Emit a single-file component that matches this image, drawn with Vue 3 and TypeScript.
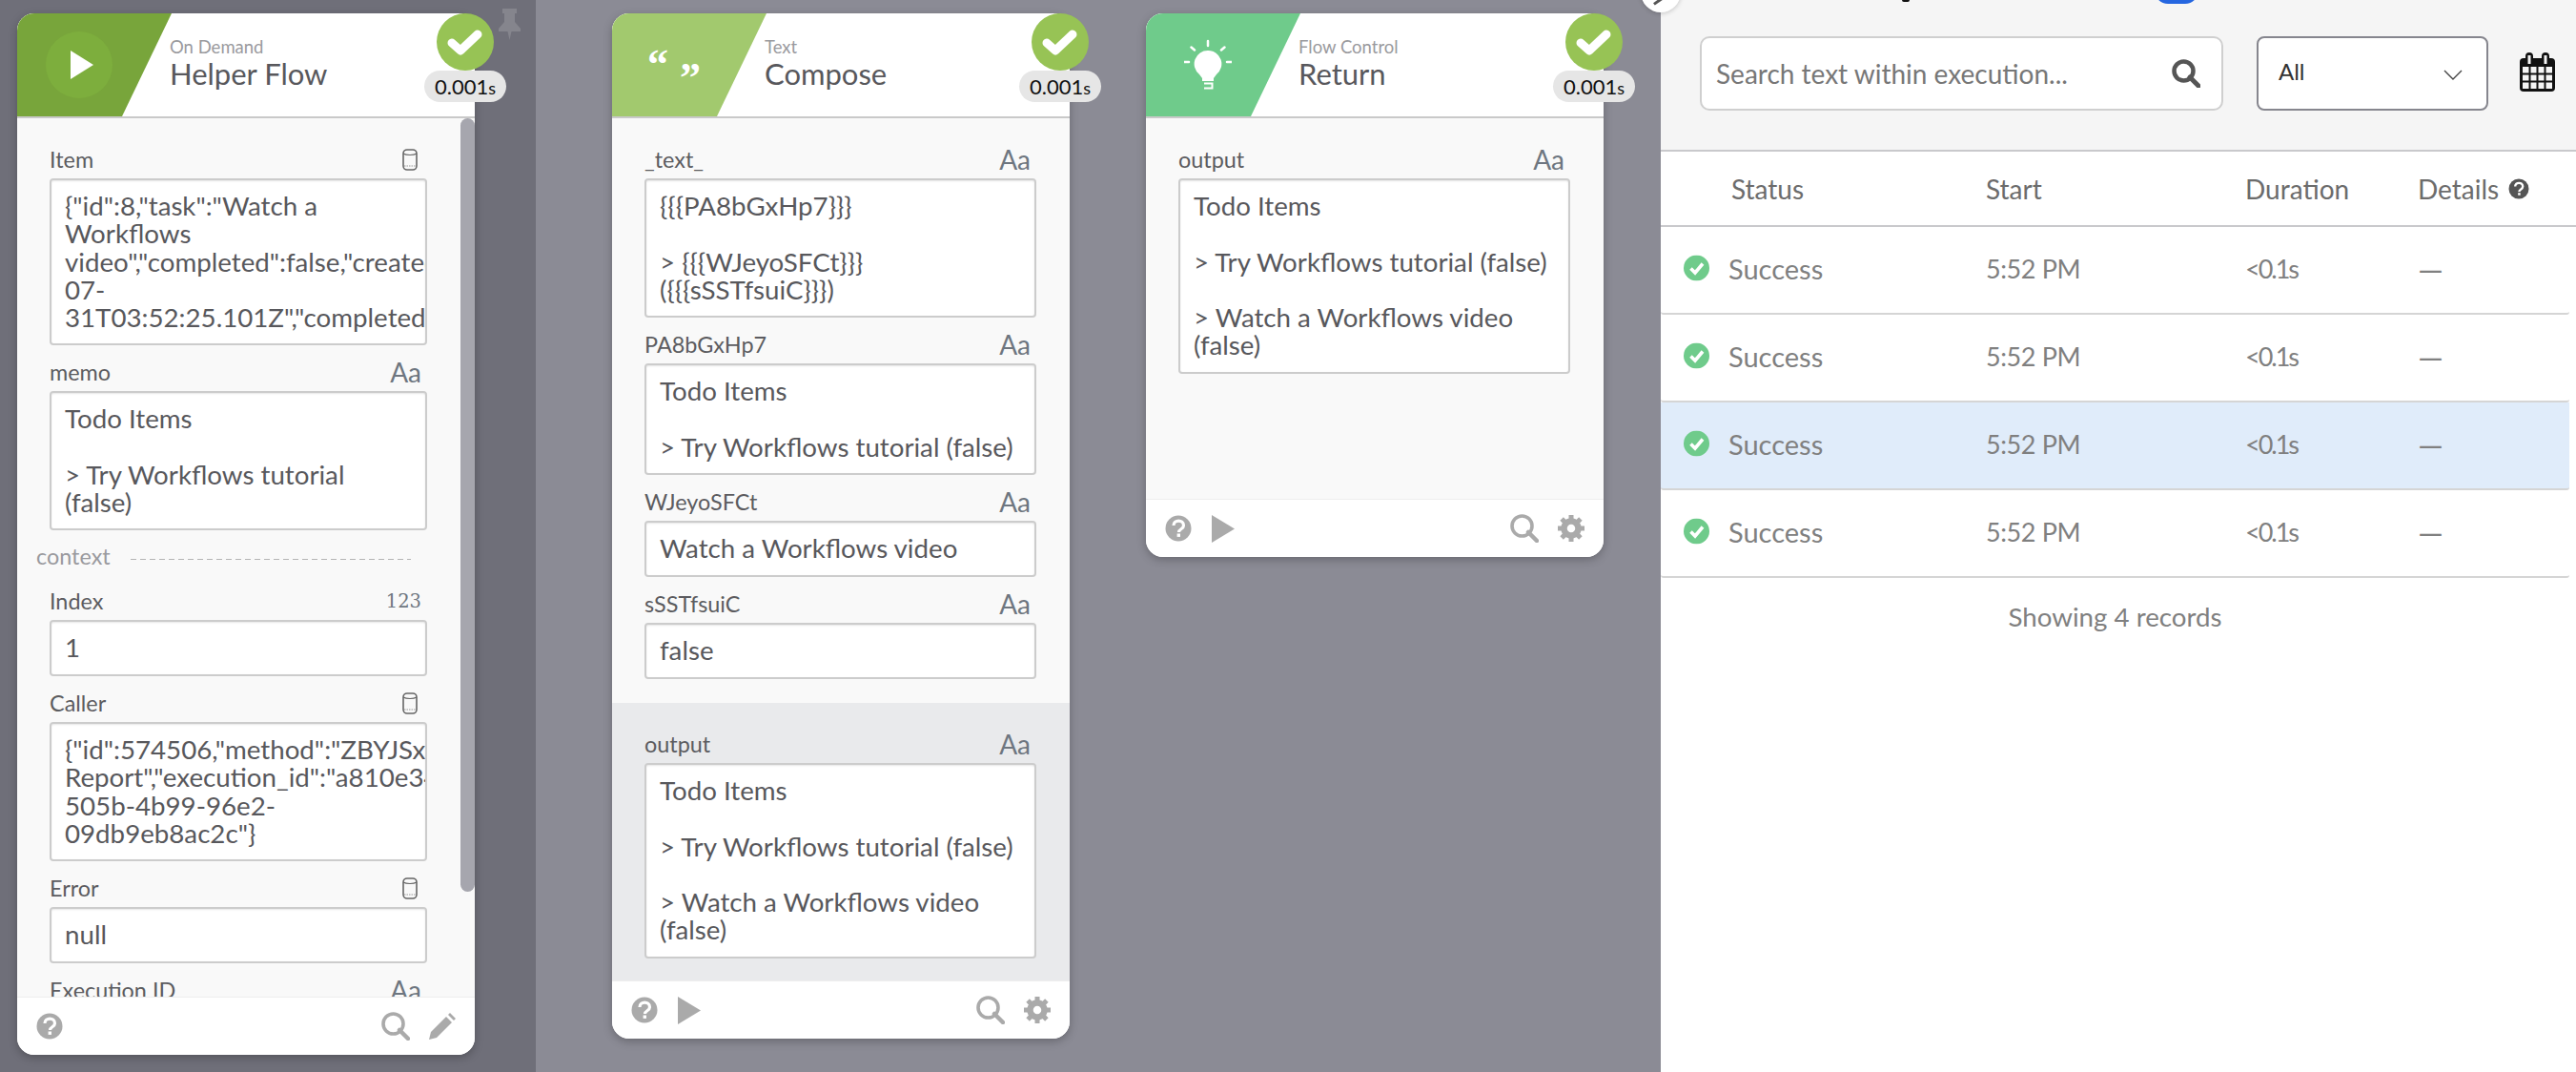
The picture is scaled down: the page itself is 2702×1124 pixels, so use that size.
<template>
  <div class="page">
    <!-- pinned step column -->
    <aside class="pinned">
      <section class="card">
        <header class="card-head">
          <div class="head-tab tab-dark">
            <span class="play-disc">
              <svg viewBox="0 0 24 30" width="24" height="30"><path d="M0 0 24 15 0 30Z" fill="#fff" /></svg>
            </span>
          </div>
          <div class="head-text">
            <div class="kind">On Demand</div>
            <div class="title">Helper Flow</div>
          </div>
        </header>
        <div class="status-badge">
          <svg viewBox="0 0 60 60" width="60" height="60"><circle cx="30" cy="30" r="30" fill="#97c355" /><path d="M16 31 25 39 43 22" fill="none" stroke="#fff" stroke-width="9" stroke-linecap="round" stroke-linejoin="round" /></svg>
          <span class="time">0.001<small>s</small></span>
        </div>
        <div class="pinned-body">
          <div class="scroll-thumb"></div>
          <div class="field">
            <div class="field-label"><span>Item</span><svg class="db" viewBox="0 0 16 23" width="16" height="23"><rect x="1" y="1" width="14" height="21" rx="4" fill="none" stroke="#666" stroke-width="1.600" /><path d="M1 5c3 2 11 2 14 0" fill="none" stroke="#666" stroke-width="1.200" /><path d="M2 18h12" stroke="#999" stroke-width="1" stroke-dasharray="1.500 1" /></svg></div>
            <div class="box clip h-item">{{ itemJson }}</div>
          </div>
          <div class="field">
            <div class="field-label"><span>memo</span><span class="aa">Aa</span></div>
            <div class="box h-memo">{{ memo }}</div>
          </div>
          <div class="context"><span>context</span><i></i></div>
          <div class="field">
            <div class="field-label"><span>Index</span><span class="num">123</span></div>
            <div class="box h-one">1</div>
          </div>
          <div class="field">
            <div class="field-label"><span>Caller</span><svg class="db" viewBox="0 0 16 23" width="16" height="23"><rect x="1" y="1" width="14" height="21" rx="4" fill="none" stroke="#666" stroke-width="1.600" /><path d="M1 5c3 2 11 2 14 0" fill="none" stroke="#666" stroke-width="1.200" /><path d="M2 18h12" stroke="#999" stroke-width="1" stroke-dasharray="1.500 1" /></svg></div>
            <div class="box clip h-caller">{{ callerJson }}</div>
          </div>
          <div class="field">
            <div class="field-label"><span>Error</span><svg class="db" viewBox="0 0 16 23" width="16" height="23"><rect x="1" y="1" width="14" height="21" rx="4" fill="none" stroke="#666" stroke-width="1.600" /><path d="M1 5c3 2 11 2 14 0" fill="none" stroke="#666" stroke-width="1.200" /><path d="M2 18h12" stroke="#999" stroke-width="1" stroke-dasharray="1.500 1" /></svg></div>
            <div class="box h-one">null</div>
          </div>
          <div class="field">
            <div class="field-label"><span>Execution ID</span><span class="aa">Aa</span></div>
          </div>
        </div>
        <footer class="card-foot">
          <svg class="ic" viewBox="0 0 28 28" width="28" height="28"><circle cx="14" cy="14" r="13.500" fill="#aaa" /><path d="M9 11c0-6.500 10.500-6.500 10.500 0 0 4-5 3.500-5 7" fill="none" stroke="#fff" stroke-width="3.200" /><rect x="12.600" y="19.500" width="3.400" height="3.400" fill="#fff" /></svg>
          <span class="grow"></span>
          <svg class="ic" viewBox="0 0 30 30" width="30" height="30"><circle cx="12.500" cy="12.500" r="10.500" fill="none" stroke="#aaa" stroke-width="3.600" /><path d="M19 19 28 28" stroke="#aaa" stroke-width="4.500" stroke-linecap="round" /></svg>
          <svg class="ic pencil" viewBox="0 0 28 28" width="28" height="28"><path d="M0 28 2 20 18 4 24 10 8 26ZM20 2l2-2 6 6-2 2Z" fill="#aaa" /></svg>
        </footer>
      </section>
      <svg class="pin" viewBox="0 0 23 33" width="23" height="33"><path d="M4 0h15v5h-2v9l6 7v3H13.500l-2 9-2-9H0v-3l6-7V5H4Z" fill="#85858d" /></svg>
    </aside>

    <!-- canvas with the rest of the flow -->
    <main class="canvas">
      <section class="card">
        <header class="card-head">
          <div class="head-tab tab-text">
            <span class="quotes"><b>“</b><b class="low">”</b></span>
          </div>
          <div class="head-text">
            <div class="kind">Text</div>
            <div class="title">Compose</div>
          </div>
        </header>
        <div class="status-badge">
          <svg viewBox="0 0 60 60" width="60" height="60"><circle cx="30" cy="30" r="30" fill="#97c355" /><path d="M16 31 25 39 43 22" fill="none" stroke="#fff" stroke-width="9" stroke-linecap="round" stroke-linejoin="round" /></svg>
          <span class="time">0.001<small>s</small></span>
        </div>
        <div class="card-body compose-in">
          <div class="field" v-for="f in composeFields" :key="f.label">
            <div class="field-label"><span>{{ f.label }}</span><span class="aa">Aa</span></div>
            <div class="box" :class="f.cls">{{ f.value }}</div>
          </div>
        </div>
        <div class="card-body compose-out">
          <div class="field">
            <div class="field-label"><span>output</span><span class="aa">Aa</span></div>
            <div class="box h-output">{{ output }}</div>
          </div>
        </div>
        <footer class="card-foot">
          <svg class="ic" viewBox="0 0 28 28" width="28" height="28"><circle cx="14" cy="14" r="13.500" fill="#aaa" /><path d="M9 11c0-6.500 10.500-6.500 10.500 0 0 4-5 3.500-5 7" fill="none" stroke="#fff" stroke-width="3.200" /><rect x="12.600" y="19.500" width="3.400" height="3.400" fill="#fff" /></svg>
          <svg class="ic run" viewBox="0 0 24 29" width="24" height="29"><path d="M0 0 24 14.500 0 29Z" fill="#aaa" /></svg>
          <span class="grow"></span>
          <svg class="ic" viewBox="0 0 30 30" width="30" height="30"><circle cx="12.500" cy="12.500" r="10.500" fill="none" stroke="#aaa" stroke-width="3.600" /><path d="M19 19 28 28" stroke="#aaa" stroke-width="4.500" stroke-linecap="round" /></svg>
          <svg class="ic gear" viewBox="0 0 28 28" width="28" height="28"><circle cx="14" cy="14" r="7.500" fill="none" stroke="#aaa" stroke-width="6.500" /><path d="M14 0v28M0 14h28M4.100 4.100l19.800 19.800M23.900 4.100 4.100 23.900" stroke="#aaa" stroke-width="5" stroke-dasharray="5 18" /></svg>
        </footer>
      </section>

      <section class="card">
        <header class="card-head">
          <div class="head-tab tab-flow">
            <svg viewBox="0 0 50 54" width="50" height="54"><path d="M25 2v5M7.500 8.500 11 11.500M42.500 8.500 39 11.500M0 24h5M45 24h5" stroke="#fff" stroke-width="2.500" stroke-linecap="round" fill="none" /><path d="M25 12a14 14 0 0 1 9 25l-3 4v3H19v-3l-3-4a14 14 0 0 1 9-25Z" fill="#fff" /><path d="M21 46.500h8.500v5H21" fill="none" stroke="#fff" stroke-width="2" /></svg>
          </div>
          <div class="head-text">
            <div class="kind">Flow Control</div>
            <div class="title">Return</div>
          </div>
        </header>
        <div class="status-badge">
          <svg viewBox="0 0 60 60" width="60" height="60"><circle cx="30" cy="30" r="30" fill="#97c355" /><path d="M16 31 25 39 43 22" fill="none" stroke="#fff" stroke-width="9" stroke-linecap="round" stroke-linejoin="round" /></svg>
          <span class="time">0.001<small>s</small></span>
        </div>
        <div class="card-body return-in">
          <div class="field">
            <div class="field-label"><span>output</span><span class="aa">Aa</span></div>
            <div class="box h-output">{{ output }}</div>
          </div>
        </div>
        <footer class="card-foot">
          <svg class="ic" viewBox="0 0 28 28" width="28" height="28"><circle cx="14" cy="14" r="13.500" fill="#aaa" /><path d="M9 11c0-6.500 10.500-6.500 10.500 0 0 4-5 3.500-5 7" fill="none" stroke="#fff" stroke-width="3.200" /><rect x="12.600" y="19.500" width="3.400" height="3.400" fill="#fff" /></svg>
          <svg class="ic run" viewBox="0 0 24 29" width="24" height="29"><path d="M0 0 24 14.500 0 29Z" fill="#aaa" /></svg>
          <span class="grow"></span>
          <svg class="ic" viewBox="0 0 30 30" width="30" height="30"><circle cx="12.500" cy="12.500" r="10.500" fill="none" stroke="#aaa" stroke-width="3.600" /><path d="M19 19 28 28" stroke="#aaa" stroke-width="4.500" stroke-linecap="round" /></svg>
          <svg class="ic gear" viewBox="0 0 28 28" width="28" height="28"><circle cx="14" cy="14" r="7.500" fill="none" stroke="#aaa" stroke-width="6.500" /><path d="M14 0v28M0 14h28M4.100 4.100l19.800 19.800M23.900 4.100 4.100 23.900" stroke="#aaa" stroke-width="5" stroke-dasharray="5 18" /></svg>
        </footer>
      </section>
    </main>

    <!-- execution history -->
    <aside class="history">
      <span class="collapse-knob"><i></i></span>
      <div class="history-top">
        <span class="cut-tail"></span>
        <span class="cut-blue"></span>
        <div class="filters">
          <div class="search">
            <span>Search text within execution...</span>
            <svg viewBox="0 0 30 30" width="30" height="30"><circle cx="12.500" cy="12.500" r="10" fill="none" stroke="#555" stroke-width="4.500" /><path d="M19 19 28 28" stroke="#555" stroke-width="5" stroke-linecap="round" /></svg>
          </div>
          <div class="select">
            <span>All</span>
            <svg viewBox="0 0 20 11" width="20" height="11"><path d="M1 1 10 10 19 1" fill="none" stroke="#444" stroke-width="1.400" /></svg>
          </div>
          <svg class="cal" viewBox="0 0 37 41" width="37" height="41">
            <rect y="6" width="37" height="35" rx="4" fill="#111" />
            <rect x="3" y="15" width="31" height="23" fill="#f5f5f5" />
            <path d="M3 22.500h31M3 30.500h31M10.500 15v23M18.500 15v23M26.500 15v23" stroke="#111" stroke-width="2" />
            <rect x="6" width="8" height="14" rx="4" fill="#111" />
            <rect x="23" width="8" height="14" rx="4" fill="#111" />
            <rect x="8.500" y="3" width="3" height="9" fill="#f5f5f5" />
            <rect x="25.500" y="3" width="3" height="9" fill="#f5f5f5" />
          </svg>
        </div>
      </div>
      <div class="table-head">
        <span class="c-status">Status</span>
        <span class="c-start">Start</span>
        <span class="c-duration">Duration</span>
        <span class="c-details">Details
          <svg viewBox="0 0 22 22" width="22" height="22"><circle cx="11" cy="11" r="10.500" fill="#555" /><path d="M7.200 8.600c0-5 8-5 8 0 0 3-3.800 2.600-3.800 5.400" fill="none" stroke="#fff" stroke-width="2.400" /><rect x="10.200" y="15.200" width="2.500" height="2.500" fill="#fff" /></svg>
        </span>
      </div>
      <div class="row" v-for="(r, i) in rows" :key="i" :class="{ selected: r.selected }">
        <span class="c-icon">
          <svg viewBox="0 0 27 27" width="27" height="27"><circle cx="13.500" cy="13.500" r="13.500" fill="#6fcb8b" /><path d="M7.500 14 12 18.500 20 9" fill="none" stroke="#fff" stroke-width="3.600" /></svg>
        </span>
        <span class="c-result">Success</span>
        <span class="c-start r-start">5:52 PM</span>
        <span class="c-duration r-duration">&lt;0.1s</span>
        <span class="c-details r-dash">—</span>
      </div>
      <div class="records">Showing 4 records</div>
    </aside>
  </div>
</template>

<script setup lang="ts">
const itemJson =
  '{"id":8,"task":"Watch a Workflows video","completed":false,"created_at":"2023-07-31T03:52:25.101Z","completedAt":null}'
const callerJson =
  '{"id":574506,"method":"ZBYJSxReport Report","execution_id":"a810e34a-505b-4b99-96e2-09db9eb8ac2c"}'
const memo = 'Todo Items\n\n> Try Workflows tutorial (false)'
const output = memo + '\n\n> Watch a Workflows video (false)'

const composeFields = [
  { label: '_text_', value: '{{{PA8bGxHp7}}}\n\n> {{{WJeyoSFCt}}} ({{{sSSTfsuiC}}})', cls: 'h-text' },
  { label: 'PA8bGxHp7', value: memo, cls: 'h-pa' },
  { label: 'WJeyoSFCt', value: 'Watch a Workflows video', cls: 'h-one' },
  { label: 'sSSTfsuiC', value: 'false', cls: 'h-one' },
]

const rows = [{ selected: false }, { selected: false }, { selected: true }, { selected: false }]
</script>

<style>
html, body { margin: 0; height: 100%; overflow: hidden; }
#app { height: 100%; }
</style>

<style scoped>
.page {
  display: flex;
  width: 2702px;
  height: 1124px;
  overflow: hidden;
  background: #8b8b95;
  font-family: Lato, "Open Sans", sans-serif;
  color: #58585c;
}

.pinned {
  position: relative;
  width: 562px;
  flex: none;
  box-sizing: border-box;
  padding: 14px 0 0 18px;
  background: #6f6f79;
}
.pin { position: absolute; left: 523px; top: 9px; }

.canvas {
  display: flex;
  flex: none;
  align-items: flex-start;
  width: 1180px;
  box-sizing: border-box;
  padding: 14px 0 0 80px;
  gap: 80px;
}

.card {
  position: relative;
  display: flex;
  flex-direction: column;
  width: 480px;
  flex: none;
  border-radius: 18px;
  background: #f9f9f9;
  box-shadow: 0 3px 10px rgba(0, 0, 0, 0.25);
}

.card-head {
  display: flex;
  height: 110px;
  box-sizing: border-box;
  border-radius: 18px 18px 0 0;
  overflow: hidden;
  background: #fff;
  border-bottom: 2px solid #c9c9c9;
}
.head-tab {
  display: flex;
  align-items: center;
  justify-content: center;
  width: 162px;
  box-sizing: border-box;
  padding-right: 32px;
  clip-path: polygon(0 0, 100% 0, 110px 100%, 0 100%);
}
.tab-dark { background: #78a53b; }
.tab-text { background: #a2c96e; }
.tab-flow { background: #6fcb8b; }

.play-disc {
  display: flex;
  align-items: center;
  justify-content: center;
  width: 70px;
  height: 70px;
  border-radius: 50%;
  background: #7dae3d;
  padding-left: 5px;
  box-sizing: border-box;
}
.quotes {
  display: flex;
  gap: 12px;
  height: 40px;
  color: #fff;
  font-family: "Liberation Serif", serif;
  font-size: 44px;
  line-height: 44px;
}
.quotes b { display: block; font-weight: 700; margin-top: -2px; }
.quotes .low { margin-top: 12px; }

.head-text { padding: 24px 0 0 0; margin-left: -2px; }
.kind { font-size: 18.500px; line-height: 22px; color: #9a9a9e; }
.title { font-size: 31px; line-height: 38px; margin-top: -2px; color: #58585c; }

.status-badge {
  position: absolute;
  right: -33px;
  top: 0;
  width: 86px;
  display: flex;
  flex-direction: column;
  align-items: center;
}
.time {
  width: 86px;
  height: 33px;
  line-height: 33px;
  border-radius: 17px;
  background: #e6e6e6;
  color: #111;
  font-size: 22px;
  text-align: center;
}
.time small { font-size: 18px; }

.card-body { box-sizing: border-box; padding: 27px 35px 0 34px; }
.compose-in { height: 613px; }
.compose-out { height: 291px; background: #e9eaec; }
.return-in { height: 399px; }

.pinned-body {
  position: relative;
  height: 921px;
  overflow: hidden;
  box-sizing: border-box;
  padding: 27px 50px 0 34px;
}
.scroll-thumb {
  position: absolute;
  right: 0;
  top: 0;
  width: 15px;
  height: 811px;
  border-radius: 8px;
  background: #a6a6ae;
}

.field + .field { margin-top: 12px; }
.field-label {
  display: flex;
  justify-content: space-between;
  align-items: center;
  height: 32px;
  margin-bottom: 4px;
  padding-right: 6px;
  font-size: 23.400px;
  color: #5c5c60;
}
.aa { font-size: 28px; color: #6e7680; }
.num { font-size: 19.500px; color: #6e7680; font-family: "DejaVu Serif", serif; }
.db { margin-right: 4px; }

.box {
  box-sizing: border-box;
  padding: 12px 14px;
  border: 2px solid #cccccc;
  border-radius: 4px;
  background: #fff;
  font-size: 27.700px;
  line-height: 29.300px;
  white-space: pre-wrap;
  overflow: hidden;
  box-shadow: inset 0 1px 2px rgba(0, 0, 0, 0.1);
}
.clip { white-space: normal; }
.h-item { height: 175px; }
.h-memo { height: 146px; }
.h-one { height: 59px; }
.h-caller { height: 146px; }
.h-text { height: 146px; }
.h-pa { height: 117px; }
.h-output { height: 205px; }

.context {
  display: flex;
  align-items: center;
  height: 24px;
  margin: 15px 17px 19px -14px;
  font-size: 23.400px;
  color: #9a9a9e;
}
.context i {
  flex: 1;
  height: 1px;
  margin: 6px 0 0 21px;
  background: repeating-linear-gradient(90deg, #b4b4b4 0 6px, transparent 6px 10px);
}

.card-foot {
  display: flex;
  align-items: center;
  height: 61px;
  box-sizing: border-box;
  padding: 0 20px;
  background: #fff;
  border-radius: 0 0 18px 18px;
  border-top: 1px solid #eee;
}
.grow { flex: 1; }
.run { margin-left: 21px; }
.gear { margin-left: 20px; }
.pencil { margin-left: 20px; }

.history {
  position: relative;
  width: 960px;
  flex: none;
  background: #fff;
  font-size: 28px;
  color: #808080;
}
.collapse-knob {
  position: absolute;
  z-index: 2;
  left: -21px;
  top: -29px;
  width: 42px;
  height: 42px;
  border-radius: 50%;
  background: #fff;
  box-shadow: 0 1px 5px rgba(0, 0, 0, 0.2);
}
.collapse-knob i {
  position: absolute;
  left: 13px;
  top: 29px;
  width: 10px;
  height: 3px;
  background: #555;
  transform: rotate(-35deg);
}
.history-top {
  position: relative;
  height: 159px;
  box-sizing: border-box;
  padding: 38px 0 0 41px;
  background: #f5f5f5;
  border-bottom: 2px solid #c9c9cc;
}
.cut-blue {
  position: absolute;
  left: 518px;
  top: -24px;
  width: 46px;
  height: 28px;
  border-radius: 15px;
  background: #2566e0;
}
.cut-tail {
  position: absolute;
  left: 253px;
  top: 0;
  width: 8px;
  height: 2px;
  border-radius: 0 0 3px 3px;
  background: #111;
}
.filters { display: flex; align-items: flex-start; }
.search {
  display: flex;
  align-items: center;
  justify-content: space-between;
  box-sizing: border-box;
  width: 549px;
  height: 78px;
  padding: 0 22px 0 15px;
  border: 2px solid #cfcfcf;
  border-radius: 10px;
  background: #fff;
  color: #777;
}
.select {
  display: flex;
  align-items: center;
  justify-content: space-between;
  box-sizing: border-box;
  width: 243px;
  height: 78px;
  margin-left: 35px;
  padding: 0 25px 6px 21px;
  border: 2px solid #86868e;
  border-radius: 8px;
  background: #fff;
  color: #333;
  font-size: 24px;
}
.select svg { margin-top: 8px; }
.cal { margin: 17px 0 0 33px; }

.table-head {
  position: relative;
  height: 79px;
  box-sizing: border-box;
  border-bottom: 2px solid #c9c9cc;
  color: #6c6c6c;
}
.table-head span, .row > span {
  position: absolute;
  top: 50%;
  transform: translateY(-50%);
  white-space: nowrap;
}
.row > span { top: 48%; }
.c-status { left: 74px; }
.c-icon { left: 24px; line-height: 0; }
.c-result { left: 71px; font-size: 29px; }
.c-start { left: 341px; }
.c-duration { left: 613px; }
.c-details { left: 794px; display: flex; align-items: center; gap: 10px; }
.table-head svg { flex: none; }
.r-start { font-size: 27px; letter-spacing: -0.4px; }
.r-duration { font-size: 27px; letter-spacing: -2px; }
.r-dash { font-size: 34px; }

.row {
  position: relative;
  width: 953px;
  height: 92px;
  box-sizing: border-box;
  border-bottom: 2px solid #d5d5d5;
  border-radius: 0 0 3px 3px;
}
.selected { background: #e0ecfa; }
.records { text-align: center; padding-top: 23px; margin-right: 7px; line-height: 36px; font-size: 27.700px; }
</style>
